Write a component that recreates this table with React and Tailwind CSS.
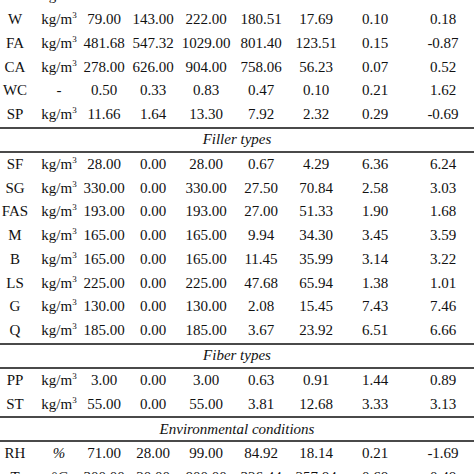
import React from "react";

const cols = "grid grid-cols-[30px_58px_32px_66px_40px_70px_40px_78px_58px] h-[23.75px] items-center";

const kg = (
  <span>
    kg/m<sup className="text-[9px] -top-[6px]">3</sup>
  </span>
);

const sections = [
  {
    title: null,
    rows: [
      ["C", kg, "102.00", "320.00", "540.00", "378.23", "89.15", "0.14", "-0.65"],
      ["W", kg, "79.00", "143.00", "222.00", "180.51", "17.69", "0.10", "0.18"],
      ["FA", kg, "481.68", "547.32", "1029.00", "801.40", "123.51", "0.15", "-0.87"],
      ["CA", kg, "278.00", "626.00", "904.00", "758.06", "56.23", "0.07", "0.52"],
      ["WC", "-", "0.50", "0.33", "0.83", "0.47", "0.10", "0.21", "1.62"],
      ["SP", kg, "11.66", "1.64", "13.30", "7.92", "2.32", "0.29", "-0.69"]
    ]
  },
  {
    title: "Filler types",
    rows: [
      ["SF", kg, "28.00", "0.00", "28.00", "0.67", "4.29", "6.36", "6.24"],
      ["SG", kg, "330.00", "0.00", "330.00", "27.50", "70.84", "2.58", "3.03"],
      ["FAS", kg, "193.00", "0.00", "193.00", "27.00", "51.33", "1.90", "1.68"],
      ["M", kg, "165.00", "0.00", "165.00", "9.94", "34.30", "3.45", "3.59"],
      ["B", kg, "165.00", "0.00", "165.00", "11.45", "35.99", "3.14", "3.22"],
      ["LS", kg, "225.00", "0.00", "225.00", "47.68", "65.94", "1.38", "1.01"],
      ["G", kg, "130.00", "0.00", "130.00", "2.08", "15.45", "7.43", "7.46"],
      ["Q", kg, "185.00", "0.00", "185.00", "3.67", "23.92", "6.51", "6.66"]
    ]
  },
  {
    title: "Fiber types",
    rows: [
      ["PP", kg, "3.00", "0.00", "3.00", "0.63", "0.91", "1.44", "0.89"],
      ["ST", kg, "55.00", "0.00", "55.00", "3.81", "12.68", "3.33", "3.13"]
    ]
  },
  {
    title: "Environmental conditions",
    rows: [
      ["RH", <i>%</i>, "71.00", "28.00", "99.00", "84.92", "18.14", "0.21", "-1.69"],
      ["T", <i>°C</i>, "300.00", "20.00", "800.00", "326.44", "257.84", "0.68", "0.48"]
    ]
  }
];

const Line = () => <div className="h-[2px] bg-[#4a4a4a]" />;

export default function App() {
  return (
    <div className="w-[474px] h-[474px] overflow-hidden bg-white text-[#111] text-[15px] font-['Liberation_Serif']">
      <div className="-mt-[16px]">
        {sections.map((section, si) => (
          <div key={si}>
            {section.title && (
              <>
                <Line />
                <div className="h-[22px] flex items-center justify-center italic">{section.title}</div>
                <Line />
              </>
            )}
            {section.rows.map((row, ri) => (
              <div key={ri} className={cols}>
                {row.map((cell, ci) => (
                  <div key={ci} className="flex justify-center whitespace-nowrap leading-none">
                    {cell}
                  </div>
                ))}
              </div>
            ))}
          </div>
        ))}
      </div>
    </div>
  );
}
